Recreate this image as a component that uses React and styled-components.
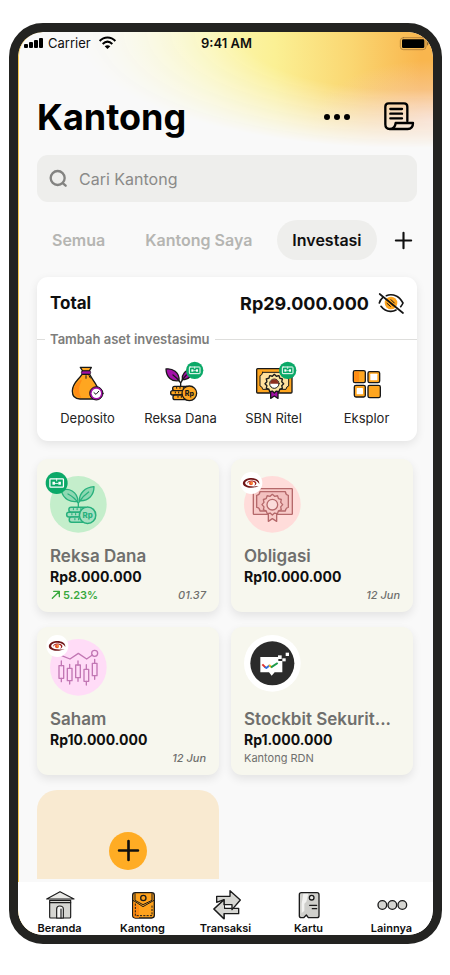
import React, { useState } from 'react';
import styled, { createGlobalStyle } from 'styled-components';

const GlobalStyle = createGlobalStyle`
  * {
    box-sizing: border-box;
  }

  body {
    margin: 0;
    background-color: #ffffff;
    font-family: Inter, "Liberation Sans", sans-serif;
    color: #0f0f0f;
  }

  button, input {
    font-family: inherit;
    color: inherit;
    border: none;
    background: none;
    padding: 0;
    margin: 0;
  }

  button {
    cursor: pointer;
  }

  svg {
    display: block;
    overflow: visible;
    flex-shrink: 0;
  }
`;

const StyledPage = styled.div`
  padding: 23px 8px 31px 9px;
`;

const StyledPhone = styled.div`
  border: 9px solid #232321;
  border-radius: 34px;
  overflow: hidden;
  background-color: #232321;
`;

const StyledScreen = styled.div`
  position: relative;
  display: flex;
  flex-direction: column;
  border-radius: 24px;
  overflow: hidden;
  background-color: #f9f9f9;
  box-shadow: inset 1px 0px 0px #f5c84c;

  &::before{
    content:"";
    position: absolute;
    top: 0;
    left: 0;
    right: 0;
    height: 116px;
    background:
      radial-gradient(ellipse 120px 60px at 100% 76%, rgba(247, 208, 190, 0.9), rgba(247, 208, 190, 0)),
      linear-gradient(to right, #fafae0 20%, #fbf7b4 45%, #fbf094 62%, #fad772 80%, #f9b64e 97%);
    mask-image: radial-gradient(ellipse 80% 100% at 94% 0%, #000 50%, rgba(0, 0, 0, 0.5) 75%, transparent 100%);
  }
`;

const StyledStatusBar = styled.div`
  position: relative;
  height: 22px;
  padding: 0px 4px 0px 6px;
  display: grid;
  grid-template-columns: 1fr auto 1fr;
  align-items: center;
  font-size: 13px;
`;

const StyledCarrier = styled.div`
  display: flex;
  align-items: center;
  gap: 5px;

  svg:last-child{
    margin-left: 3px;
  }
`;

const StyledClock = styled.div`
  font-weight: 600;
`;

const StyledBattery = styled.div`
  justify-self: end;
`;

const StyledContent = styled.main`
  position: relative;
  padding: 41px 16px 3px 19px;
`;

const StyledHeader = styled.header`
  height: 44px;
  display: flex;
  align-items: center;
  gap: 32px;
  padding-right: 2px;
`;

const StyledTitle = styled.h1`
  margin: 0px;
  flex: 1;
  font-size: 36px;
  line-height: 44px;
  font-weight: 700;
  color: #000000;
`;

const StyledSearch = styled.label`
  margin-top: 16px;
  height: 47px;
  padding: 0px 12px;
  display: flex;
  align-items: center;
  gap: 10px;
  border-radius: 11px;
  background-color: #eeeeec;
`;

const StyledInput = styled.input`
  flex: 1;
  min-width: 0px;
  font-size: 16px;
  outline: none;

  &::placeholder{
    color: #8a8a88;
    opacity: 1;
  }
`;

const StyledTabs = styled.nav`
  margin-top: 18px;
  display: flex;
  align-items: center;
  gap: 10px;
`;

const StyledTab = styled.button`
  height: 40px;
  padding: 0px 15px;
  border-radius: 20px;
  font-size: 16px;
  font-weight: 600;
  white-space: nowrap;
  color: ${({ $active }) => $active ? '#0f0f0f' : '#b5b5b2'};
  background-color: ${({ $active }) => $active ? '#eeeeec' : 'transparent'};
`;

const StyledAddTab = styled.button`
  width: 28px;
  height: 28px;
  margin-left: auto;
  display: grid;
  place-items: center;
`;

const StyledTotalCard = styled.section`
  margin-top: 17px;
  height: 164px;
  border-radius: 11px;
  background-color: #ffffff;
  box-shadow: 0px 3px 10px rgba(0, 0, 0, 0.09);
`;

const StyledTotalRow = styled.div`
  height: 52px;
  padding: 0px 13px;
  display: flex;
  align-items: center;
  gap: 8px;
  font-size: 18px;
  font-weight: 700;
`;

const StyledTotalLabel = styled.span`
  flex: 1;
  font-size: 17px;
`;

const StyledCaption = styled.div`
  display: flex;
  align-items: center;
  gap: 5px;
  font-size: 13px;
  line-height: 20px;
  font-weight: 600;
  color: #7d7d7b;

  &::before, &::after{
    content:"";
    height: 1px;
    background-color: #dededc;
  }

  &::before{
    width: 8px;
  }

  &::after{
    flex: 1;
  }
`;

const StyledShortcuts = styled.div`
  padding: 14px 4px 0px;
  display: grid;
  grid-template-columns: repeat(4, 1fr);
`;

const StyledShortcut = styled.button`
  display: grid;
  justify-items: center;
  gap: 6px;
  font-size: 13px;
  line-height: 18px;
  color: #232323;
`;

const StyledGrid = styled.section`
  margin: 18px 4px 0px 0px;
  display: grid;
  grid-template-columns: 1fr 1fr;
  grid-template-rows: 153px 148px 89px;
  gap: 15px 12px;
`;

const StyledPocket = styled.article`
  min-width: 0px;
  padding: 0px 13px 9px;
  display: flex;
  flex-direction: column;
  justify-content: flex-end;
  border-radius: 11px;
  background-color: #f7f7ee;
  box-shadow: 0px 4px 10px rgba(0, 0, 0, 0.09);
`;

const StyledPocketIcon = styled.div`
  margin-bottom: ${({ $raised }) => $raised ? '16px' : '12px'};
`;

const StyledPocketName = styled.h2`
  margin: 0px;
  font-size: 17px;
  line-height: 22px;
  font-weight: 600;
  color: #6f6f6d;
  overflow: hidden;
  white-space: nowrap;
  text-overflow: ellipsis;
`;

const StyledAmount = styled.div`
  font-size: 14px;
  line-height: 20px;
  font-weight: 700;
`;

const StyledPocketFooter = styled.div`
  height: 16px;
  display: flex;
  align-items: center;
  font-size: 11px;
  color: #6f6f6d;
`;

const StyledGain = styled.span`
  display: flex;
  align-items: center;
  gap: 2px;
  font-weight: 600;
  color: #38a83c;
`;

const StyledDate = styled.em`
  margin-left: auto;
  font-weight: 500;
`;

const StyledAddPocket = styled.button`
  padding-top: 32px;
  border-radius: 20px 20px 0px 0px;
  background-color: #f9ead1;
  display: grid;
  place-items: center;
`;

const StyledPlusCircle = styled.span`
  width: 38px;
  height: 38px;
  border-radius: 50%;
  background-color: #ffac24;
  display: grid;
  place-items: center;
`;

const StyledBottomNav = styled.nav`
  position: relative;
  height: 53px;
  padding-top: 7px;
  display: grid;
  grid-template-columns: repeat(5, 1fr);
  background-color: #ffffff;
`;

const StyledNavLink = styled.a`
  display: grid;
  align-content: start;
  justify-items: center;
  font-size: 11px;
  line-height: 14px;
  font-weight: 600;
  color: #0f0f0f;
  text-decoration: none;
`;

const Svg = ({ w, h, vw = w * 3, vh = h * 3, children }) => (
  <svg width={w} height={h} viewBox={`0 0 ${vw} ${vh}`} fill="none" strokeLinecap="round" strokeLinejoin="round" aria-hidden="true">
    {children}
  </svg>
);

const SignalIcon = () => (
  <Svg w={19} h={10} vw={19} vh={10}>
    <rect x="0" y="6" width="4" height="4" rx="1" fill="#000" />
    <rect x="5" y="4" width="4" height="6" rx="1" fill="#000" />
    <rect x="10" y="2" width="4" height="8" rx="1" fill="#000" />
    <rect x="15" y="0" width="4" height="10" rx="1" fill="#000" />
  </Svg>
);

const WifiIcon = () => (
  <Svg w={17} h={12}>
    <path d="M2 12 C15 -2 36 -2 49 12" stroke="#000" strokeWidth="6" strokeLinecap="butt" />
    <path d="M11 21 C20 12 31 12 40 21" stroke="#000" strokeWidth="6" strokeLinecap="butt" />
    <path d="M17 28 Q25.500 21 34 28 L25.500 36 Z" fill="#000" />
  </Svg>
);

const BatteryIcon = () => (
  <Svg w={29} h={13}>
    <rect x="1" y="2" width="77" height="36" rx="9" stroke="#9a6c34" strokeWidth="2" />
    <rect x="6" y="7" width="67" height="26" rx="4" fill="#000" />
    <path d="M82 14 Q88 20 82 26 Z" fill="#6b4c26" />
  </Svg>
);

const DotsIcon = () => (
  <Svg w={28} h={8} vw={28} vh={8}>
    <circle cx="4" cy="4" r="3" fill="#000" />
    <circle cx="14" cy="4" r="3" fill="#000" />
    <circle cx="24" cy="4" r="3" fill="#000" />
  </Svg>
);

const ScrollIcon = () => (
  <Svg w={32} h={32}>
    <g stroke="#000" strokeWidth="7">
      <path d="M73 60 V17 Q73 7 63 7 H17 Q7 7 7 17 V70 Q7 84 20 84 H74 Q90 84 90 66 H38 Q36 84 20 84" />
      <path d="M22 24 H57 M22 38 H57 M22 52 H57" />
    </g>
  </Svg>
);

const SearchIcon = () => (
  <Svg w={20} h={20}>
    <circle cx="26" cy="27" r="21" stroke="#838381" strokeWidth="7" />
    <path d="M42 43 L50 50" stroke="#838381" strokeWidth="7" />
  </Svg>
);

const PlusIcon = ({ size }) => (
  <Svg w={size} h={size} vw={20} vh={20}>
    <path d="M10 1 V19 M1 10 H19" stroke="#0f0f0f" strokeWidth="2.500" />
  </Svg>
);

const EyeOffIcon = () => (
  <Svg w={27} h={24}>
    <circle cx="42" cy="36" r="19" fill="#ffa620" />
    <g stroke="#141414" strokeWidth="5">
      <path d="M28 14 Q42 8 58 15 Q68 19 78 36 Q76 41 71 47" />
      <path d="M17 20 Q10 26 7 36 M12 46 Q24 62 42 61 Q50 61 57 57" />
      <path d="M34 30 L48 43 M42 26 L52 36 M30 37 L40 46" strokeWidth="3" />
      <path d="M8 9 L78 66" />
    </g>
  </Svg>
);

const RobotBadge = ({ x, y, r }) => (
  <g>
    <circle cx={x} cy={y} r={r} fill="#0ba968" />
    <g transform={`translate(${x} ${y}) scale(${r / 26})`}>
      <rect x="-16" y="-10" width="32" height="20" rx="2" stroke="#fff" strokeWidth="3" />
      <path d="M0 -10 V-5 M-3 1 H3" stroke="#fff" strokeWidth="2" />
      <rect x="-10" y="-3" width="6" height="7" fill="#fff" />
      <rect x="4" y="-3" width="6" height="7" fill="#fff" />
    </g>
  </g>
);

const SwirlBadge = () => (
  <g>
    <circle cx="22" cy="21" r="33" fill="#fff" />
    <path d="M46 24 C47 10 30 4 14 7 C-2 10 -8 22 0 29 C8 36 28 38 44 30 C30 33 10 32 5 25 C0 17 10 11 22 11 C34 11 42 16 46 24 Z" fill="#6e1517" />
    <path d="M30 29 C40 26 40 16 28 14 C16 12 8 18 10 23 C13 17 22 15 29 18 C35 21 34 26 30 29 Z" fill="#a3211f" />
    <circle cx="21" cy="22" r="6" fill="#ee5a2c" />
    <circle cx="24" cy="21" r="3" fill="#f59a3c" />
  </g>
);

const DepositoIcon = () => (
  <Svg w={48} h={40}>
    <path d="M54 34 C44 50 25 60 25 84 C25 100 34 108 48 108 H86 C102 108 107 96 103 82 C99 62 84 50 77 34 Z" fill="#ffa620" stroke="#191919" strokeWidth="4" />
    <path d="M48 52 C36 62 28 72 30 86 C32 100 42 104 52 104 C42 88 44 68 54 52 Z" fill="#ff8c14" />
    <path d="M49 13 H82 L76 24 H56 Z" fill="#ffa620" stroke="#191919" strokeWidth="4" />
    <rect x="52" y="24" width="28" height="9" rx="3" fill="#a30fa8" stroke="#191919" strokeWidth="2" />
    <path d="M66 38 V46 M75 38 L79 45" stroke="#191919" strokeWidth="3" />
    <circle cx="97" cy="91" r="20" fill="#a30fa8" stroke="#191919" strokeWidth="3" />
    <circle cx="97" cy="91" r="14" fill="#fff" />
    <path d="M90 89 L96 94 L104 85" stroke="#191919" strokeWidth="3" />
  </Svg>
);

const CoinStack = ({ x, y, fill, line }) => (
  <g transform={`translate(${x} ${y})`} stroke={line} strokeWidth="4">
    <rect x="6" y="0" width="48" height="13" rx="6" fill={fill} />
    <rect x="0" y="13" width="48" height="13" rx="6" fill={fill} />
    <rect x="7" y="26" width="48" height="14" rx="6" fill={fill} />
    <path d="M18 3 V6 M28 3 V6 M38 3 V6 M14 17 V20 M24 17 V20 M22 30 V33 M32 30 V33" strokeWidth="3" />
    <circle cx="56" cy="21" r="22" fill={fill} />
    <text x="56" y="28" textAnchor="middle" fontSize="21" fontWeight="800" fill={line} stroke="none">Rp</text>
  </g>
);

const ReksaIcon = () => (
  <Svg w={48} h={40}>
    <g stroke="#191919" strokeWidth="4">
      <path d="M27 18 C46 15 68 28 66 53 C44 56 28 44 27 18 Z" fill="#a30fa8" />
      <path d="M76 50 C74 34 84 22 104 16 C106 38 96 50 76 50 Z" fill="#a30fa8" />
      <path d="M71 68 V60 Q64 48 48 36 M71 60 Q76 48 88 36" />
    </g>
    <CoinStack x={41} y={70} fill="#ffa620" line="#191919" />
    <RobotBadge x={113} y={22} r={26} />
  </Svg>
);

const rosette = (cx, cy, r) => {
  const points = [];
  for (let i = 0; i < 24; i++) {
    const radius = i % 2 ? r - 5 : r;
    const angle = (i * Math.PI) / 12;
    points.push(`${(cx + radius * Math.cos(angle)).toFixed(1)},${(cy + radius * Math.sin(angle)).toFixed(1)}`);
  }
  return points.join(' ');
};

const SbnIcon = () => (
  <Svg w={48} h={40}>
    <g stroke="#191919" strokeWidth="4">
      <rect x="20" y="17" width="106" height="73" rx="3" fill="#ffa620" />
      <path d="M38 28 H108 Q109 37 116 38 V69 Q109 70 108 79 H38 Q37 70 30 69 V38 Q37 37 38 28 Z" fill="#ffdf9c" strokeWidth="3" />
      <path d="M62 80 V106 L73 99 L84 106 V80 Z" fill="#a30fa8" />
      <polygon points={rosette(73, 62, 28)} fill="#fde6a2" />
      <circle cx="73" cy="62" r="14" fill="#fff" strokeWidth="3" />
    </g>
    <path d="M60 62 A13 13 0 0 1 86 62 Z" fill="#8d3020" />
    <RobotBadge x={113} y={22} r={26} />
  </Svg>
);

const EksplorIcon = () => (
  <Svg w={48} h={40}>
    <g stroke="#191919" strokeWidth="4">
      <rect x="31" y="23" width="36" height="36" rx="5" fill="#ffa620" />
      <rect x="75" y="26" width="35" height="33" rx="5" fill="#ffa620" />
      <rect x="34" y="67" width="33" height="35" rx="5" fill="#ffa620" />
      <rect x="75" y="67" width="37" height="37" rx="5" fill="#ffa620" />
    </g>
    <path d="M34 26 H48 V56 H34 Z" fill="#ff8c14" />
    <rect x="82" y="32" width="21" height="20" rx="2" fill="#fff" />
    <rect x="41" y="75" width="19" height="19" rx="2" fill="#fff" />
  </Svg>
);

const ReksaPocketIcon = () => (
  <Svg w={57} h={57}>
    <circle cx="85" cy="85" r="85" fill="#c4eecb" />
    <g stroke="#27b07c" strokeWidth="4" fill="#8ed8b2">
      <path d="M34 44 C56 34 82 46 84 76 C62 80 40 70 34 44 Z" />
      <path d="M88 74 C88 52 104 34 132 32 C132 56 116 76 88 74 Z" />
      <path d="M85 92 V82 Q74 64 54 54 M86 80 Q98 60 116 48" fill="none" />
    </g>
    <g transform="translate(50 94) scale(1.12)">
      <CoinStack x={0} y={0} fill="#a5dfc0" line="#27b07c" />
    </g>
    <RobotBadge x={20} y={21} r={33} />
  </Svg>
);

const ObligasiIcon = () => (
  <Svg w={57} h={57}>
    <circle cx="85" cy="85" r="85" fill="#ffdcda" />
    <g stroke="#b5696b" strokeWidth="4" fill="#f8cbc9">
      <rect x="28" y="38" width="117" height="77" rx="2" />
      <path d="M48 47 H124 Q125 57 133 58 V94 Q125 95 124 105 H48 Q47 95 38 94 V58 Q47 57 48 47 Z" fill="#f3c1c0" />
      <path d="M73 108 V136 L85 128 L98 136 V108 Z" />
      <polygon points={rosette(85, 86, 31)} />
      <circle cx="85" cy="86" r="16" fill="#fbdcdb" />
    </g>
    <SwirlBadge />
  </Svg>
);

const candles = [
  { x: 34, top: 66, open: 80, close: 118, bottom: 128 },
  { x: 59, top: 76, open: 88, close: 125, bottom: 135 },
  { x: 84, top: 66, open: 78, close: 116, bottom: 127 },
  { x: 109, top: 77, open: 91, close: 127, bottom: 138 },
  { x: 134, top: 61, open: 73, close: 110, bottom: 121 },
];

const SahamIcon = () => (
  <Svg w={57} h={57}>
    <circle cx="85" cy="85" r="85" fill="#ffdcf7" />
    <g stroke="#c277b4" strokeWidth="4">
      <path d="M35 50 L60 60 L85 43 L110 60 L127 48" />
      <circle cx="134" cy="43" r="9" />
      {
        candles.map(({ x, top, open, close, bottom }) => (
          <g key={x}>
            <path d={`M${x} ${top} V${open} M${x} ${close} V${bottom}`} />
            <rect x={x - 7} y={open} width="14" height={close - open} />
          </g>
        ))
      }
    </g>
    <SwirlBadge />
  </Svg>
);

const StockbitIcon = () => (
  <Svg w={57} h={57}>
    <circle cx="85" cy="85" r="85" fill="#fff" />
    <circle cx="85" cy="85" r="66" fill="#2b2b2b" />
    <path d="M49 66 H103 V78 H115 V112 H92 L83 122 L75 112 H49 Z" fill="#fff" />
    <rect x="102" y="61" width="11" height="11" fill="#fff" />
    <rect x="125" y="53" width="10" height="10" fill="#fff" />
    <rect x="115" y="70" width="10" height="9" fill="#fff" />
    <g strokeWidth="6" strokeLinecap="butt">
      <path d="M55 88 L64 97" stroke="#e2332d" />
      <path d="M62 96 L67 99 L77 91" stroke="#2f6fe0" />
      <path d="M75 90 L83 97" stroke="#f4b81c" />
      <path d="M81 97 L101 84" stroke="#1d9a4b" />
    </g>
  </Svg>
);

const GainIcon = () => (
  <Svg w={11} h={10}>
    <path d="M7 25 L27 5 M11 4 H28 V20" stroke="#38a83c" strokeWidth="4" />
  </Svg>
);

const BerandaIcon = () => (
  <Svg w={32} h={32}>
    <g stroke="#1b1b1b" strokeWidth="3.500">
      <path d="M17 34 H80 V84 Q80 87 77 87 H20 Q17 87 17 84 Z" fill="#d6d6d2" />
      <path d="M8 30 L48 8 L90 30 Z" fill="#e9e9e6" />
      <path d="M18 41 H80" />
      <path d="M38 87 V60 Q38 51 47 51 Q58 51 58 60 V87 Z" fill="#f4f4f2" />
      <path d="M51 60 V87" />
    </g>
  </Svg>
);

const KantongIcon = () => (
  <Svg w={32} h={32}>
    <rect x="17" y="11" width="65" height="76" rx="8" fill="#ffa21c" stroke="#1b1b1b" strokeWidth="4" />
    <path d="M19 40 L36 50 V86 H25 Q19 86 19 80 Z" fill="#ff8c14" />
    <path d="M25 45 V80 H75 V45" stroke="#1b1b1b" strokeWidth="3" strokeDasharray="4 6" />
    <path d="M18 34 L48 53 L81 34 M24 14 V34 L48 47 L75 34 V14" stroke="#1b1b1b" strokeWidth="3" />
    <circle cx="49" cy="27" r="8" fill="#ffa21c" stroke="#1b1b1b" strokeWidth="4" />
  </Svg>
);

const TransaksiIcon = () => (
  <Svg w={32} h={32}>
    <g stroke="#1b1b1b" strokeWidth="4" fill="#d6d6d2">
      <path d="M44 58 H86 V74 H42 V89 L12 60 L42 32 V47 Z" />
      <path d="M20 22 H60 V5 L91 33 L66 62 V47 H42 V32 L20 40 Z" />
      <path d="M42 47 V32 L12 60 L42 89 V74" />
    </g>
  </Svg>
);

const KartuIcon = () => (
  <Svg w={32} h={32}>
    <path d="M25 11 H72 Q78 11 78 17 V80 Q78 86 72 86 H46 L40 78 L32 86 H25 Q19 86 19 80 V17 Q19 11 25 11 Z" fill="#cfcfcb" stroke="#1b1b1b" strokeWidth="4" />
    <path d="M31 14 H46 L40 38 L34 44 V66 L26 72 V44 Z" fill="#f3f3f1" />
    <circle cx="56" cy="26" r="7" fill="#e6e6e3" stroke="#1b1b1b" strokeWidth="4" />
    <path d="M50 49 H71 M58 59 H71" stroke="#1b1b1b" strokeWidth="4" />
  </Svg>
);

const LainnyaIcon = () => (
  <Svg w={32} h={32}>
    <g stroke="#1b1b1b" strokeWidth="4" fill="#d6d6d2">
      <circle cx="19" cy="48" r="13" />
      <circle cx="49" cy="48" r="13" />
      <circle cx="79" cy="48" r="13" />
    </g>
  </Svg>
);

const tabs = ['Semua', 'Kantong Saya', 'Investasi'];

const shortcuts = [
  { label: 'Deposito', Icon: DepositoIcon },
  { label: 'Reksa Dana', Icon: ReksaIcon },
  { label: 'SBN Ritel', Icon: SbnIcon },
  { label: 'Eksplor', Icon: EksplorIcon },
];

const pockets = [
  { name: 'Reksa Dana', amount: 'Rp8.000.000', gain: '5.23%', date: '01.37', Icon: ReksaPocketIcon },
  { name: 'Obligasi', amount: 'Rp10.000.000', date: '12 Jun', Icon: ObligasiIcon },
  { name: 'Saham', amount: 'Rp10.000.000', date: '12 Jun', Icon: SahamIcon },
  { name: 'Stockbit Sekurit...', amount: 'Rp1.000.000', note: 'Kantong RDN', raised: true, Icon: StockbitIcon },
];

const links = [
  { label: 'Beranda', Icon: BerandaIcon },
  { label: 'Kantong', Icon: KantongIcon },
  { label: 'Transaksi', Icon: TransaksiIcon },
  { label: 'Kartu', Icon: KartuIcon },
  { label: 'Lainnya', Icon: LainnyaIcon },
];

const Pocket = ({ name, amount, gain, date, note, raised, Icon }) => (
  <StyledPocket>
    <StyledPocketIcon $raised={raised}><Icon /></StyledPocketIcon>
    <StyledPocketName>{name}</StyledPocketName>
    <StyledAmount>{amount}</StyledAmount>
    <StyledPocketFooter>
      {gain && <StyledGain><GainIcon />{gain}</StyledGain>}
      {note}
      {date && <StyledDate>{date}</StyledDate>}
    </StyledPocketFooter>
  </StyledPocket>
);

const App = () => {

  const [activeTab, setActiveTab] = useState('Investasi');

  return (
    <StyledPage>
      <GlobalStyle />
      <StyledPhone>
        <StyledScreen>
          <StyledStatusBar>
            <StyledCarrier>
              <SignalIcon />
              Carrier
              <WifiIcon />
            </StyledCarrier>
            <StyledClock>9:41 AM</StyledClock>
            <StyledBattery><BatteryIcon /></StyledBattery>
          </StyledStatusBar>
          <StyledContent>
            <StyledHeader>
              <StyledTitle>Kantong</StyledTitle>
              <button type="button" aria-label="Menu"><DotsIcon /></button>
              <button type="button" aria-label="Riwayat"><ScrollIcon /></button>
            </StyledHeader>
            <StyledSearch>
              <SearchIcon />
              <StyledInput type="text" placeholder="Cari Kantong" aria-label="Cari Kantong" />
            </StyledSearch>
            <StyledTabs>
              {
                tabs.map(tab => (
                  <StyledTab key={tab} type="button" $active={tab === activeTab} onClick={() => setActiveTab(tab)}>{tab}</StyledTab>
                ))
              }
              <StyledAddTab type="button" aria-label="Tambah"><PlusIcon size={17} /></StyledAddTab>
            </StyledTabs>
            <StyledTotalCard>
              <StyledTotalRow>
                <StyledTotalLabel>Total</StyledTotalLabel>
                <span>Rp29.000.000</span>
                <button type="button" aria-label="Sembunyikan"><EyeOffIcon /></button>
              </StyledTotalRow>
              <StyledCaption>Tambah aset investasimu</StyledCaption>
              <StyledShortcuts>
                {
                  shortcuts.map(({ label, Icon }) => (
                    <StyledShortcut key={label} type="button"><Icon />{label}</StyledShortcut>
                  ))
                }
              </StyledShortcuts>
            </StyledTotalCard>
            <StyledGrid>
              {pockets.map(pocket => <Pocket key={pocket.name} {...pocket} />)}
              <StyledAddPocket type="button" aria-label="Tambah Kantong">
                <StyledPlusCircle><PlusIcon size={21} /></StyledPlusCircle>
              </StyledAddPocket>
            </StyledGrid>
          </StyledContent>
          <StyledBottomNav>
            {
              links.map(({ label, Icon }) => (
                <StyledNavLink key={label} href={`#${label.toLowerCase()}`}><Icon />{label}</StyledNavLink>
              ))
            }
          </StyledBottomNav>
        </StyledScreen>
      </StyledPhone>
    </StyledPage>
  );
}

export default App;
